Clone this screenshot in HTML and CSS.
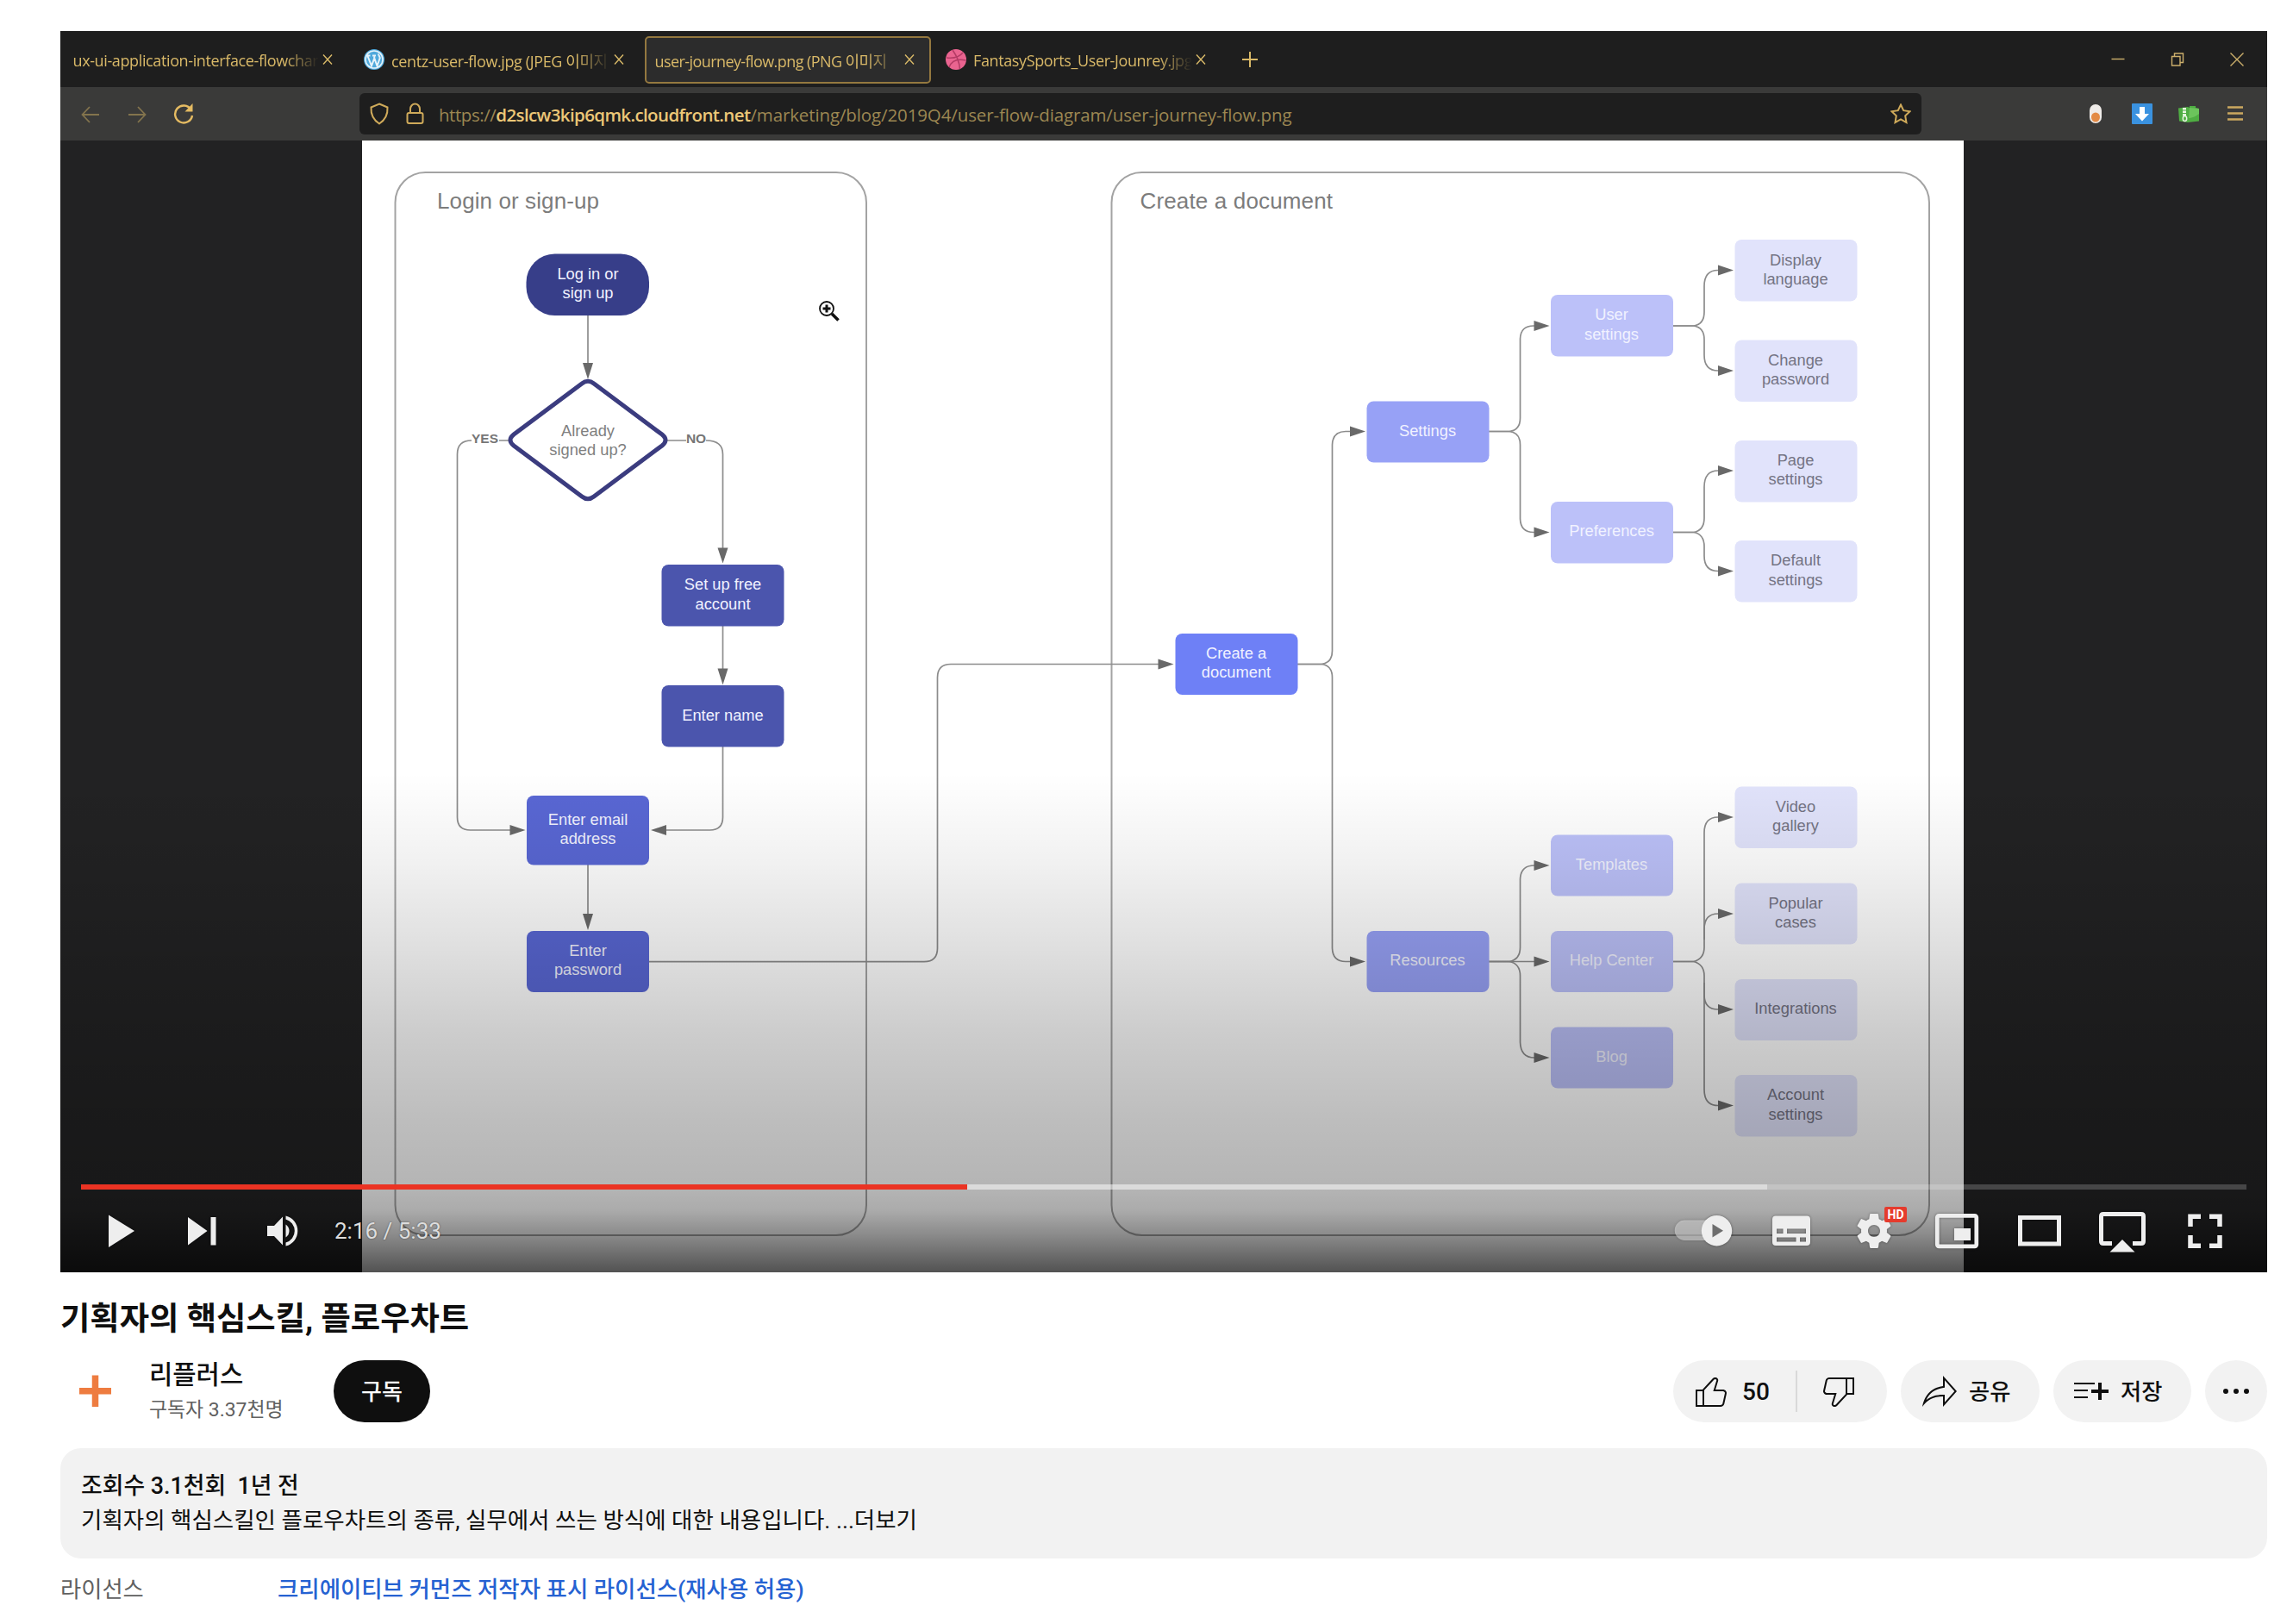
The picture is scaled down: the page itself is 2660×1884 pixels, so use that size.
FILE: index.html
```html
<!DOCTYPE html>
<html lang="ko">
<head>
<meta charset="utf-8">
<title>기획자의 핵심스킬, 플로우차트</title>
<link rel="stylesheet" href="styles.css">
</head>
<body>
<main class="watch">
  <section class="player">
    <div class="tabbar">
      <div class="tab"><span class="tab-title t1">ux-ui-application-interface-flowchart</span><svg class="tab-close" viewBox="0 0 14 14"><path d="M2 1.5 12 12.5M12 1.5 2 12.5"/></svg></div>
      <div class="tab">
        <svg class="favicon" viewBox="0 0 24 24"><circle cx="12" cy="12" r="12" fill="#4fa9dc"/><circle cx="12" cy="12" r="10" fill="none" stroke="#e6f3fa" stroke-width="1.6"/><path d="M4.5 8 9 19.500 12.300 10.500 15.500 19.500 19 9.500M7.500 7.500h-4M14 7.500h-4M12 8.500 12.500 11M17.500 5.500C16 7 19.500 8 18.500 11" fill="none" stroke="#e6f3fa" stroke-width="2"/></svg>
        <span class="tab-title t2">centz-user-flow.jpg (JPEG 이미지</span><svg class="tab-close" viewBox="0 0 14 14"><path d="M2 1.500 12 12.500M12 1.500 2 12.500"/></svg></div>
      <div class="tab active"><span class="tab-title t3">user-journey-flow.png (PNG 이미지</span><svg class="tab-close" viewBox="0 0 14 14"><path d="M2 1.500 12 12.500M12 1.500 2 12.500"/></svg></div>
      <div class="tab">
        <svg class="favicon" viewBox="0 0 24 24"><circle cx="12" cy="12" r="12" fill="#ea6490"/><path d="M1 10C9 11 16 9 20 4M8 1C13 8 16 15 16.500 23M4 21C7 13 14 11 23.500 13" fill="none" stroke="#b43b65" stroke-width="1.600"/></svg>
        <span class="tab-title t4">FantasySports_User-Jounrey.jpg</span><svg class="tab-close" viewBox="0 0 14 14"><path d="M2 1.500 12 12.500M12 1.500 2 12.500"/></svg></div>
      <svg class="new-tab" viewBox="0 0 18 18"><path d="M9 0V18M0 9H18"/></svg>
      <div class="window-buttons">
        <svg viewBox="0 0 16 16"><path d="M.5 7.500H15.500"/></svg>
        <svg viewBox="0 0 16 16"><path d="M1.500 4.500H11V15H1.500ZM4.500 4.500V1H14.500V11.500H11"/></svg>
        <svg viewBox="0 0 16 16"><path d="M.5.500 15.500 15.500M15.500.500.500 15.500"/></svg>
      </div>
    </div>

    <div class="toolbar">
      <div class="nav">
        <svg class="dim" viewBox="0 0 24 24"><path d="M22 13H3M11 4 2.500 13 11 22"/></svg>
        <svg class="dim" viewBox="0 0 24 24"><path d="M2 13H21M13 4 21.500 13 13 22"/></svg>
        <svg class="reload" viewBox="0 0 24 24"><path d="M20.500 7A10 10 0 1 0 22 14"/><path d="M22.500 0V9.500H13.500Z" fill="#e5bb62" stroke="none"/></svg>
      </div>
      <div class="urlbar">
        <svg class="shield" viewBox="0 0 24 26"><path d="M12 1.500 21.500 5.500C22 14 19 20 12 24.500 5 20 2 14 2.500 5.500Z"/></svg>
        <svg class="lock" viewBox="0 0 24 26"><rect x="2.500" y="12" width="18" height="12" rx="2"/><path d="M6 12V7.500a5.500 6 0 0 1 11 0V12"/></svg>
        <div class="url"><span class="u1">https://</span><span class="u2">d2slcw3kip6qmk.cloudfront.net</span><span class="u3">/marketing/blog/2019Q4/user-flow-diagram/user-journey-flow.png</span></div>
        <svg class="star" viewBox="0 0 24 24"><path d="M12 1.500 15.200 8.200 22.500 9.200 17.200 14.300 18.500 22 12 18.300 5.500 22 6.800 14.300 1.500 9.200 8.800 8.200Z"/></svg>
      </div>
      <div class="extensions">
        <svg viewBox="0 0 26 26"><rect x="6" y="2" width="14" height="22" rx="7" fill="#efebe8"/><ellipse cx="13" cy="17" rx="5" ry="5.500" fill="#e38a45"/></svg>
        <svg viewBox="0 0 26 26"><rect x="1" y="1" width="24" height="24" rx="1" fill="#3a92e0"/><path d="M10 5h6v8h5l-8 8.500L5 13h5Z" fill="#fff"/></svg>
        <svg viewBox="0 0 26 26"><path d="M1 6.500 12 5 14 6V4h7v2l4 1V21.500L12 23 2 21.500Z" fill="#4fae43"/><path d="M14 6 25 7V13C20 17 16 18 13 18Z" fill="#6cc45c"/><path d="M8 6v10" stroke="#e6f5df" stroke-width="4" stroke-dasharray="2.500 1"/><ellipse cx="8.500" cy="18.500" rx="2.200" ry="3" fill="none" stroke="#e6f5df" stroke-width="1.500"/></svg>
        <svg viewBox="0 0 26 26"><path d="M4 5.500H22M4 12.500H22M4 19.500H22" stroke="#cba85f" stroke-width="2.300"/></svg>
      </div>
    </div>

    <div class="viewport">
      <svg class="diagram" viewBox="420 163 1858 1313" font-size="18.3">
        <g class="groups">
          <rect x="458.500" y="200" width="546.500" height="1233" rx="35"/>
          <rect x="1289.500" y="200" width="948.500" height="1233" rx="35"/>
        </g>
        <g class="group-titles">
          <text x="507" y="242" textLength="188">Login or sign-up</text>
          <text x="1322.500" y="242" textLength="223.500">Create a document</text>
        </g>

        <g class="links">
          <path d="M682 366V422"/>
          <path d="M590 511H579M547 511C536 511 530.500 516 530.500 527V948Q530.500 963 545.500 963H593"/>
          <path d="M774 511H796M819 511C832 511 838.500 516 838.500 527V637"/>
          <path d="M838.500 726V777"/>
          <path d="M838.500 866V948Q838.500 963 823.500 963H772"/>
          <path d="M682 1003V1061"/>
          <path d="M753 1115.700H1072Q1087.500 1115.700 1087.500 1100V786Q1087.500 770.500 1103 770.500H1345"/>
          <path d="M1505 770.500H1533Q1545.500 769 1545.500 755V516Q1546 500.500 1561 500.500H1567"/>
          <path d="M1505 770.500H1533Q1545.500 772 1545.500 786V1100Q1546 1115.500 1561 1115.500H1567"/>
          <path d="M1727 500.500H1751Q1763.500 499 1763.500 485V393Q1764 378 1779 378H1780"/>
          <path d="M1727 500.500H1751Q1763.500 502 1763.500 516V602Q1764 617.500 1779 617.500H1780"/>
          <path d="M1941 378H1965Q1977 376 1977 362V332Q1977 313.500 1993 313.500"/>
          <path d="M1941 378H1965Q1977 380 1977 394V412Q1977 430 1993 430"/>
          <path d="M1941 617.500H1965Q1977 615 1977 601V565Q1977 546 1993 546"/>
          <path d="M1941 617.500H1965Q1977 620 1977 634V645Q1977 662.500 1993 662.500"/>
          <path d="M1727 1115.500H1781"/>
          <path d="M1727 1115.500H1751Q1763.500 1113 1763.500 1099V1020Q1764 1004 1780 1004"/>
          <path d="M1727 1115.500H1751Q1763.500 1118 1763.500 1132V1209Q1764 1227 1780 1227"/>
          <path d="M1941 1115.500H1965Q1977 1112 1977 1099V966Q1977 948 1993 948"/>
          <path d="M1977 1090V1078Q1977 1060 1993 1060"/>
          <path d="M1941 1115.500H1965Q1977 1119 1977 1132V1264Q1977 1282.500 1993 1282.500"/>
          <path d="M1977 1140V1154Q1977 1171 1993 1171"/>
        </g>
        <g fill="#696969">
          <path d="M676 421h12l-6 19zM832.500 635.500h12l-6 18zM832.500 775.500h12l-6 19zM676 1060h12l-6 19zM591.500 957v12l18-6zM773 957v12l-18-6z"/>
          <path d="M1343.500 764.500v12l18-6zM1566 494.500v12l18-6zM1566 1109.500v12l18-6zM1779.500 372v12l18-6zM1779.500 611.500v12l18-6zM1779.500 998v12l18-6zM1779.500 1109.500v12l18-6zM1779.500 1221v12l18-6z"/>
          <path d="M1993 307.500v12l18-6zM1993 424v12l18-6zM1993 540v12l18-6zM1993 656.500v12l18-6zM1993 942v12l18-6zM1993 1054v12l18-6zM1993 1165v12l18-6zM1993 1276.500v12l18-6z"/>
        </g>

        <rect x="610.500" y="294.500" width="142.500" height="71.500" rx="33" fill="#373e89"/>
        <path d="M675 445Q682 439.500 689 445L768 504Q776 510.500 768 517L689 576Q682 581.500 675 576L596 517Q588 510.500 596 504Z" fill="#fff" stroke="#3b3c7f" stroke-width="5"/>
        <g fill="#4b55ad">
          <rect x="767.500" y="655" width="142" height="71.500" rx="8"/>
          <rect x="767.500" y="795" width="142" height="71.500" rx="8"/>
        </g>
        <g fill="#5967d4">
          <rect x="611" y="923" width="142" height="80.500" rx="8"/>
          <rect x="611" y="1080" width="142" height="71" rx="8"/>
        </g>
        <rect x="1363.500" y="735" width="142" height="71" rx="8" fill="#6e80f6"/>
        <g fill="#97a1f6">
          <rect x="1585.500" y="465.500" width="142" height="71" rx="8"/>
          <rect x="1585.500" y="1080" width="142" height="71" rx="8"/>
        </g>
        <g fill="#bcc1f9">
          <rect x="1799" y="342" width="142" height="71.500" rx="8"/>
          <rect x="1799" y="582" width="142" height="71.500" rx="8"/>
          <rect x="1799" y="968.500" width="142" height="71" rx="8"/>
          <rect x="1799" y="1080" width="142" height="71" rx="8"/>
          <rect x="1799" y="1191.500" width="142" height="71" rx="8"/>
        </g>
        <g fill="#e1e3fb">
          <rect x="2012.500" y="278" width="142" height="71.500" rx="8"/>
          <rect x="2012.500" y="394.500" width="142" height="71.500" rx="8"/>
          <rect x="2012.500" y="511" width="142" height="71.500" rx="8"/>
          <rect x="2012.500" y="627" width="142" height="71.500" rx="8"/>
          <rect x="2012.500" y="912.500" width="142" height="71.500" rx="8"/>
          <rect x="2012.500" y="1024.500" width="142" height="71" rx="8"/>
          <rect x="2012.500" y="1136" width="142" height="71" rx="8"/>
          <rect x="2012.500" y="1247" width="142" height="71.500" rx="8"/>
        </g>

        <g class="labels light">
          <text x="682" y="324">Log in or</text><text x="682" y="346">sign up</text>
          <text x="838.500" y="684">Set up free</text><text x="838.500" y="706.500">account</text>
          <text x="838.500" y="835.500">Enter name</text>
          <text x="682" y="957">Enter email</text><text x="682" y="979">address</text>
          <text x="682" y="1109">Enter</text><text x="682" y="1131">password</text>
          <text x="1434" y="764">Create a</text><text x="1434" y="786">document</text>
          <text x="1656" y="506">Settings</text>
          <text x="1656" y="1120">Resources</text>
          <text x="1869.500" y="371">User</text><text x="1869.500" y="393.500">settings</text>
          <text x="1869.500" y="622">Preferences</text>
          <text x="1869.500" y="1009">Templates</text>
          <text x="1869.500" y="1120">Help Center</text>
          <text x="1869.500" y="1231.500">Blog</text>
        </g>
        <g class="labels grey">
          <text x="682" y="506">Already</text><text x="682" y="528">signed up?</text>
        </g>
        <g class="labels grey bold">
          <text x="562.500" y="514">YES</text><text x="807.500" y="514">NO</text>
        </g>
        <g class="labels leaf">
          <text x="2083" y="307.500">Display</text><text x="2083" y="329.500">language</text>
          <text x="2083" y="423.500">Change</text><text x="2083" y="446">password</text>
          <text x="2083" y="540">Page</text><text x="2083" y="562">settings</text>
          <text x="2083" y="656">Default</text><text x="2083" y="678.500">settings</text>
          <text x="2083" y="942">Video</text><text x="2083" y="964">gallery</text>
          <text x="2083" y="1053.500">Popular</text><text x="2083" y="1075.500">cases</text>
          <text x="2083" y="1176">Integrations</text>
          <text x="2083" y="1276">Account</text><text x="2083" y="1298.500">settings</text>
        </g>

        <g fill="none" stroke="#111">
          <circle cx="959" cy="358" r="8" stroke-width="1.800"/>
          <path d="M954.500 358h9M959 353.500v9" stroke-width="3"/>
          <path d="M965 364 972.500 371.500" stroke-width="3.500"/>
        </g>
      </svg>
    </div>

    <div class="shade"></div>
    <div class="controls">
      <div class="progress"><i class="buffered"></i><i class="played"></i></div>
      <div class="buttons">
        <svg class="narrow" viewBox="94 1380 94 96"><path d="M126 1409.500 156 1428 126 1447Z"/></svg>
        <svg class="narrow" viewBox="188 1380 94 96"><path d="M218 1412 240.500 1428 218 1444.500ZM244.500 1412h6v32.500h-6Z"/></svg>
        <svg class="narrow" viewBox="282 1380 94 96"><path d="M310 1422h8l10-10.500v33L318 1434h-8Z"/><path d="M331.500 1420.500a9 9 0 0 1 0 15Z"/><path d="M331.500 1410.500a18 18 0 0 1 0 35v-4a14 14 0 0 0 0-27Z"/></svg>
        <span class="time">2:16 / 5:33</span>
        <div class="right">
          <svg class="toggle" viewBox="1918 1380 112 96"><path d="M1954.500 1415.500H1980a18 18 0 0 0 0 23.500H1954.500a11.750 11.750 0 0 1 0-23.500Z" opacity=".5"/><circle cx="1991.500" cy="1427.700" r="17.700"/><path d="M1986.500 1420v15.500l12.500-7.800Z" fill="#6d6d6d"/></svg>
          <svg viewBox="2030 1380 96 96"><path fill-rule="evenodd" d="M2060 1410.500h36q4 0 4 4v26.500q0 4-4 4h-36q-4 0-4-4v-26.500q0-4 4-4ZM2061 1425.500v5.500h7.500v-5.500ZM2073 1425.500v5.500h22v-5.500ZM2061 1435.500v5h22.500v-5ZM2088 1435.500v5h7v-5Z"/></svg>
          <div class="settings">
            <svg viewBox="-1.200 -1.200 38.400 38.400"><path d="m 23.940,18.780 c .03,-0.250 .05,-0.510 .05,-0.780 0,-0.270 -0.020,-0.520 -0.050,-0.780 l 1.680,-1.320 c .15,-0.120 .19,-0.330 .09,-0.510 l -1.600,-2.760 c -0.090,-0.170 -0.310,-0.240 -0.480,-0.170 l -1.990,.8 c -0.410,-0.320 -0.860,-0.580 -1.350,-0.780 l -0.300,-2.120 c -0.020,-0.190 -0.190,-0.330 -0.390,-0.330 l -3.200,0 c -0.200,0 -0.360,.14 -0.390,.33 l -0.300,2.120 c -0.480,.2 -0.930,.47 -1.350,.78 l -1.990,-0.800 c -0.180,-0.070 -0.390,0 -0.480,.17 l -1.600,2.760 c -0.100,.17 -0.050,.39 .09,.51 l 1.680,1.320 c -0.030,.25 -0.050,.52 -0.050,.78 0,.26 .02,.52 .05,.78 l -1.680,1.320 c -0.150,.12 -0.190,.33 -0.090,.51 l 1.600,2.760 c .09,.17 .31,.24 .48,.17 l 1.990,-0.800 c .41,.32 .86,.58 1.350,.78 l .3,2.120 c .02,.19 .19,.33 .39,.33 l 3.200,0 c .2,0 .36,-0.140 .39,-0.330 l .3,-2.120 c .48,-0.200 .93,-0.470 1.350,-0.780 l 1.990,.8 c .18,.07 .39,0 .48,-0.170 l 1.600,-2.760 c .09,-0.170 .05,-0.390 -0.090,-0.510 l -1.680,-1.320 z m -5.940,2.010 c -1.540,0 -2.800,-1.250 -2.800,-2.800 0,-1.540 1.250,-2.800 2.800,-2.800 1.540,0 2.800,1.250 2.800,2.800 0,1.540 -1.250,2.800 -2.800,2.800 z"/></svg>
            <span class="hd">HD</span>
          </div>
          <svg viewBox="2222 1380 96 96"><rect x="2247.300" y="1410.300" width="45.500" height="35.500" rx="2" fill="none" stroke="#eee" stroke-width="4.700"/><path d="M2267 1425h19v14h-19Z"/></svg>
          <svg viewBox="2318 1380 96 96"><rect x="2343.500" y="1412.500" width="45" height="30.500" fill="none" stroke="#eee" stroke-width="5"/></svg>
          <svg viewBox="2414 1380 96 96"><path d="M2450 1442.500H2440q-2.500 0-2.500-2.500V1411q0-2.500 2.500-2.500H2484q2.500 0 2.500 2.500V1440q0 2.500-2.500 2.500H2474" fill="none" stroke="#eee" stroke-width="5"/><path d="M2462 1438 2476.500 1452.500H2447.500Z"/></svg>
          <svg viewBox="2510 1380 96 96"><path d="M2541 1423V1411.300H2553M2563 1411.300H2575V1423M2575 1433V1445.200H2563M2553 1445.200H2541V1433" fill="none" stroke="#eee" stroke-width="5.500"/></svg>
        </div>
      </div>
    </div>
  </section>

  <h1 class="title">기획자의 핵심스킬, 플로우차트</h1>

  <section class="meta">
    <svg class="avatar" viewBox="0 0 80 80"><path d="M40.500 21.500V58M22 39.700H59" stroke="#ee7c40" stroke-width="7.500"/></svg>
    <div class="channel">
      <div class="name">리플러스</div>
      <div class="subs">구독자 3.37천명</div>
    </div>
    <button class="subscribe">구독</button>
    <div class="actions">
      <div class="pill rate">
        <div class="like"><svg viewBox="0 0 24 24"><path d="M18.770,11h-4.230l1.520-4.940C16.380,5.030,15.540,4,14.380,4c-0.580,0-1.140,0.240-1.520,0.650L7,11H3v10h4h1h9.430c1.060,0,1.980-0.670,2.190-1.610l1.340-6C21.230,12.150,20.180,11,18.770,11z M7,20H4v-8h3V20z M19.980,13.170l-1.340,6C18.540,19.650,18.030,20,17.430,20H8v-8.610l5.600-6.060C13.790,5.120,14.080,5,14.380,5c0.260,0,0.500,0.110,0.630,0.300c0.070,0.100,0.150,0.260,0.090,0.470l-1.520,4.940L13.180,12h1.350h4.230c0.410,0,0.800,0.170,1.030,0.460C19.920,12.610,20.050,12.860,19.980,13.170z"/></svg><span class="count">50</span></div>
        <div class="dislike"><svg viewBox="0 0 24 24"><path d="M17,4h-1H6.570C5.500,4,4.590,4.670,4.380,5.610l-1.340,6C2.770,12.850,3.820,14,5.230,14h4.230l-1.520,4.940C7.620,19.970,8.460,21,9.620,21c0.580,0,1.140-0.240,1.520-0.650L17,14h4V4H17z M10.400,19.670C10.210,19.880,9.920,20,9.620,20c-0.260,0-0.500-0.110-0.630-0.300c-0.070-0.100-0.150-0.260-0.090-0.470l1.520-4.940l0.400-1.290H9.460H5.230c-0.410,0-0.800-0.170-1.030-0.460c-0.120-0.150-0.250-0.400-0.180-0.720l1.340-6C5.460,5.350,5.970,5,6.570,5H16v8.610L10.400,19.670z M20,13h-3V5h3V13z"/></svg></div>
      </div>
      <div class="pill share"><svg viewBox="0 0 24 24"><path d="M15,5.630L20.660,12L15,18.370V15v-1h-1c-3.960,0-7.140,1-9.750,3.090c1.840-4.070,5.110-6.400,9.890-7.100L15,9.860V9V5.630 M14,3v6C6.220,10.130,3.110,15.330,2,21c2.780-3.970,6.440-6,12-6v6l8-9L14,3z"/></svg><span class="pill-text">공유</span></div>
      <div class="pill save"><svg viewBox="0 0 24 24"><path d="M22,13h-4v4h-2v-4h-4v-2h4V7h2v4h4V13z M14,7H2v1h12V7z M2,12h8v-1H2V12z M2,16h8v-1H2V16z"/></svg><span class="pill-text">저장</span></div>
      <div class="pill more"><svg viewBox="0 0 24 24"><circle cx="6" cy="12" r="1.500"/><circle cx="12" cy="12" r="1.500"/><circle cx="18" cy="12" r="1.500"/></svg></div>
    </div>
  </section>

  <section class="description">
    <p class="stats">조회수 3.1천회&nbsp; 1년 전</p>
    <p class="summary">기획자의 핵심스킬인 플로우차트의 종류, 실무에서 쓰는 방식에 대한 내용입니다. ...더보기</p>
  </section>

  <div class="license">
    <span class="license-label">라이선스</span>
    <a class="license-link">크리에이티브 커먼즈 저작자 표시 라이선스(재사용 허용)</a>
  </div>
</main>
</body>
</html>
```
FILE: styles.css
```css
* { box-sizing: border-box; }
body {
  margin: 0;
  background: #fff;
  color: #0f0f0f;
  font-family: Roboto, "Noto Sans CJK KR", sans-serif;
}
svg { display: block; flex: none; }
.watch { padding: 36px 30px 0 70px; }

/* Player */
.player {
  position: relative;
  width: 2560px;
  height: 1440px;
  overflow: hidden;
  background: #222223;
  font-family: "Open Sans", "Noto Sans CJK KR", sans-serif;
}
.tabbar {
  display: flex;
  align-items: center;
  gap: 5.500px;
  height: 65px;
  padding: 0 27px 0 3px;
  background: #1e1e1e;
}
.tab {
  display: flex;
  align-items: center;
  width: 332px;
  height: 55px;
  margin-top: 1px;
  padding: 0 16px 0 9.500px;
  border: 2px solid transparent;
  border-radius: 5px;
  color: #d9b968;
  font-size: 18px;
}
.tab.active { background: #2c2c2c; border-color: #94783f; }
.favicon { width: 24px; height: 24px; margin-right: 8px; }
.tab-title {
  flex: 1;
  min-width: 0;
  padding-top: 1px;
  overflow: hidden;
  white-space: nowrap;
  -webkit-mask-image: linear-gradient(to left, transparent, #000 40px);
  mask-image: linear-gradient(to left, transparent, #000 40px);
}
.t1, .t2, .t4 { letter-spacing: -.38px; }
.t3 { letter-spacing: -.58px; }
.tab-close { width: 14px; height: 16px; margin-left: 3px; fill: none; stroke: #d9b968; stroke-width: 1.400; }
.new-tab { width: 18px; height: 18px; margin-left: 18px; fill: none; stroke: #d9b968; stroke-width: 2; }
.window-buttons { display: flex; gap: 53px; margin-left: auto; }
.window-buttons svg { width: 16px; height: 16px; fill: none; stroke: #cdb06c; stroke-width: 1.400; }

.toolbar {
  display: flex;
  align-items: center;
  height: 62px;
  padding: 0 23px;
  background: #3a3a39;
}
.nav { display: flex; gap: 30px; width: 324px; }
.nav svg { width: 24px; height: 24px; fill: none; stroke: #e5bb62; stroke-width: 2.400; }
.nav .dim { stroke: #83744d; stroke-width: 1.800; }
.urlbar {
  display: flex;
  align-items: center;
  width: 1812px;
  height: 48px;
  padding: 0 12px 0 11px;
  border-radius: 6px;
  background: #1e1e1e;
}
.urlbar svg { fill: none; stroke: #cfaa5a; stroke-width: 2; }
.shield, .lock { width: 24px; height: 26px; }
.lock { margin-left: 18px; }
.star { width: 24px; height: 24px; margin-left: auto; }
.url { margin-left: 15px; padding-top: 2px; white-space: nowrap; font-size: 20.500px; color: #9c8752; }
.u1 { letter-spacing: -.450px; }
.u2 { letter-spacing: -.620px; color: #ecc777; font-weight: 600; }
.u3 { letter-spacing: -.120px; }
.extensions { display: flex; justify-content: space-between; width: 188px; margin: 0 1px 0 auto; }
.extensions svg { width: 26px; height: 26px; }

.viewport { width: 1858px; height: 1313px; margin-left: 350px; background: #fff; }
.diagram { width: 1858px; height: 1313px; font-family: "Liberation Sans", Arial, sans-serif; }
.groups rect { fill: none; stroke: #a3a3a3; stroke-width: 2; }
.group-titles { font-size: 26px; fill: #7c7c7c; }
.links path { fill: none; stroke: #8c8c8c; stroke-width: 1.700; }
.labels { text-anchor: middle; }
.light { fill: #f1f2ff; }
.grey { fill: #808080; }
.bold { font-size: 15.500px; font-weight: bold; fill: #767676; }
.leaf { fill: #747484; }

.shade {
  position: absolute;
  inset: 860px 0 0 0;
  background: linear-gradient(to bottom,
    rgba(0,0,0,0) 0, rgba(0,0,0,.01) 24px, rgba(0,0,0,.055) 104px, rgba(0,0,0,.125) 204px,
    rgba(0,0,0,.2) 304px, rgba(0,0,0,.26) 404px, rgba(0,0,0,.295) 484px, rgba(0,0,0,.33) 508px,
    rgba(0,0,0,.46) 537px, rgba(0,0,0,.68) 580px);
}
.controls { position: absolute; left: 24px; right: 24px; bottom: 0; height: 102px; }
.progress { position: relative; height: 6px; background: rgba(255,255,255,.2); }
.progress i { position: absolute; inset: 0 auto 0 0; }
.buffered { width: 1956px; background: rgba(255,255,255,.4); }
.played { width: 1028px; background: #eb3323; }
.buttons { display: flex; align-items: center; height: 96px; }
.buttons svg { width: 96px; height: 96px; fill: #eee; filter: drop-shadow(0 0 1.500px rgba(0,0,0,.4)); }
.buttons .narrow { width: 94px; }
.buttons .toggle { width: 112px; }
.time { margin-left: 12px; color: #ddd; font: 26px Roboto, sans-serif; text-shadow: 0 0 2px rgba(0,0,0,.5); }
.right { display: flex; margin-left: auto; }
.settings { position: relative; }
.hd {
  position: absolute;
  left: 60px;
  top: 20px;
  width: 26px;
  height: 18px;
  border-radius: 2px;
  background: #e53b2d;
  color: #fff;
  font: bold 14px/18px Roboto, sans-serif;
  text-align: center;
}

/* Details below the player */
.title { margin: 26px 0 0; height: 56px; font-size: 37.350px; line-height: 56px; font-weight: 700; }
.meta { display: flex; align-items: center; height: 80px; margin-top: 16px; }
.avatar { width: 80px; height: 80px; }
.channel { width: 214px; padding-top: 1px; margin-left: 23px; }
.name { font-size: 29.700px; line-height: 40px; font-weight: 500; }
.subs { padding-top: 2px; font-size: 22.900px; line-height: 38px; color: #606060; }
.subscribe {
  width: 112px;
  height: 72px;
  padding: 0 0 3px;
  border: 0;
  border-radius: 36px;
  background: #0f0f0f;
  color: #fff;
  font: 500 26px Roboto, "Noto Sans CJK KR", sans-serif;
}
.actions { display: flex; gap: 16px; margin-left: auto; font-size: 26.300px; font-weight: 500; }
.pill { display: flex; align-items: center; height: 72px; border-radius: 36px; background: #f2f2f2; }
.pill svg { width: 48px; height: 48px; fill: #0f0f0f; }
.pill-text { padding-bottom: 3px; }
.like { display: flex; align-items: center; width: 144px; height: 48px; padding-left: 20px; border-right: 2px solid #d9d9d9; }
.count { margin-left: 12px; font-size: 28px; }
.dislike { width: 104px; padding-left: 24px; }
.share, .save { width: 161px; padding-left: 21px; gap: 10px; }
.save { width: 160px; padding-left: 20px; }
.more { width: 72px; justify-content: center; }

.description {
  height: 128px;
  margin-top: 26px;
  padding: 24px;
  border-radius: 24px;
  background: #f2f2f2;
}
.description p { margin: 0; height: 40px; line-height: 40px; font-size: 26.500px; }
.description .stats { font-size: 26.850px; font-weight: 500; }
.license { display: flex; margin-top: 16px; font-size: 26.300px; line-height: 40px; }
.license-label { width: 252px; color: #606060; }
.license-link { color: #2562d2; font-weight: 500; font-size: 26.450px; }
```
